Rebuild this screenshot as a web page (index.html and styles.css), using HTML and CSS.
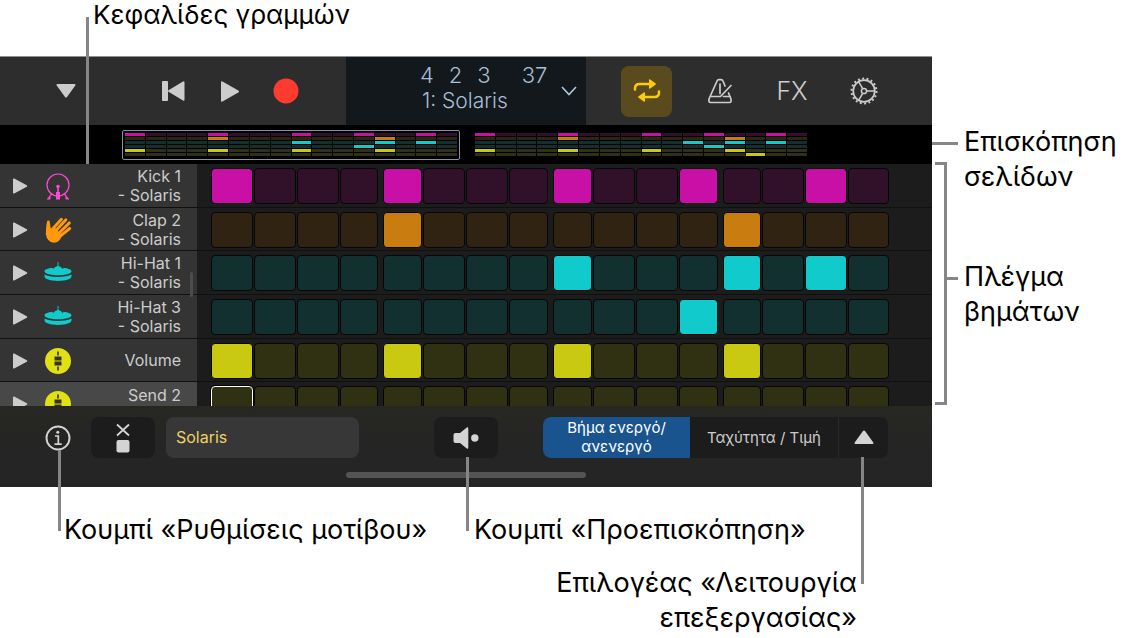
FILE: index.html
```html
<!DOCTYPE html>
<html lang="el">
<head>
<meta charset="utf-8">
<title>Beat Sequencer</title>
<link rel="stylesheet" href="styles.css">
</head>
<body>
<svg class="defs" aria-hidden="true">
  <symbol id="i-play" viewBox="0 0 16 16"><path d="M1 1.2Q1 0 2.200.6L14.800 7.200Q15.800 8 14.800 8.800L2.200 15.400Q1 16 1 14.800Z"/></symbol>
  <symbol id="i-kick" viewBox="0 0 28 28"><circle cx="14" cy="13" r="11" fill="none" stroke="currentColor" stroke-width="1.200"/><circle cx="14" cy="14.500" r="1.800"/><path d="M13.200 15h1.600v5h1.200v7.500h-4V20h1.200zM7 21.500l1.200.6-2 3 .6.800-.8 1.600H2.800l1-1.800.7-.4zM21 21.500l-1.200.6 2 3-.6.800.8 1.600h3.200l-1-1.800-.7-.4z"/></symbol>
  <symbol id="i-clap" viewBox="0 0 28 28"><path d="M1.800 18Q2 13.500 2.900 6.500L5.800 6.800 7 13.500 11 11.500 18 19.500Q15.500 26.800 10 26.800 3 26 1.800 18Z"/><g fill="none" stroke="currentColor" stroke-width="2.900" stroke-linecap="round"><path d="M4.400 6 3.500 17M17.400 3.200 8.500 13M21.900 3.700 11.500 15M25.400 6.900 13.500 18.500M25.700 12.500 15 21"/></g></symbol>
  <symbol id="i-hat" viewBox="0 0 28 28"><path d="M13.600 3h.9v4c1.700.3 3 1.500 4.300 3l.8-1.200c4.700.7 7.900 1.800 7.900 3.500 0 2.400-6 4-13.500 4S.500 14.700.5 12.300c0-1.700 3.200-2.800 7.900-3.500l.8 1.200c1.300-1.500 2.700-2.700 4.400-3z"/><path d="M.5 15.500c2.500 1.600 7.500 2.400 13.500 2.400s11-.8 13.500-2.400v1.800c0 2.700-5.800 4.700-13.500 4.700S.5 20 .5 17.300z"/></symbol>
  <symbol id="i-fader" viewBox="0 0 28 28"><circle cx="14" cy="14" r="13"/><g fill="#34341f"><path d="M13.200 4.500h1.600v4h-1.600zM13.200 19.500h1.600v4h-1.600zM10.500 9.500h7v4h-7zM10.500 14.500h7v4h-7z"/></g></symbol>
</svg>

<main class="figure">
  <p class="note note-top">Κεφαλίδες γραμμών</p>

  <section class="app">
    <header class="toolbar">
      <div class="transport">
        <button class="tool tool-menu" aria-label="Menu"><svg width="20" height="14" viewBox="0 0 20 14"><path d="M1.500 0h17q1.500 0 .8 1.500L11 13q-1 1.200-2 0L.7 1.500Q0 0 1.500 0z"/></svg></button>
        <button class="tool" aria-label="Go to beginning"><svg width="26" height="20" viewBox="0 0 26 20"><rect x="1" y="0" width="6" height="20" rx="1"/><path d="M7.500 9.200 22 .5q1.500-.8 1.500 1v17q0 1.800-1.500 1L7.500 10.800q-1-.8 0-1.600z"/></svg></button>
        <button class="tool" aria-label="Play"><svg width="20" height="21" viewBox="0 0 20 21"><path d="M1 1.500Q1-.3 2.500.5L18.300 9.600q1.300.9 0 1.800L2.500 20.500Q1 21.300 1 19.500z"/></svg></button>
        <button class="tool" aria-label="Record"><svg width="26" height="26" viewBox="0 0 26 26"><circle cx="13" cy="13" r="12.500" fill="#ff3b30"/></svg></button>
      </div>
      <button class="lcd">
        <span class="lcd-text">
          <span class="position"><span>4</span><span>2</span><span>3</span><span class="tick">37</span></span>
          <span class="pattern">1: Solaris</span>
        </span>
        <svg class="chevron" width="16" height="10" viewBox="0 0 16 10"><path d="M1 1l7 7.500L15 1" fill="none" stroke="#b0c6de" stroke-width="1.600"/></svg>
      </button>
      <div class="modes">
        <button class="loop" aria-label="Cycle"><svg width="28" height="24" viewBox="0 0 28 24"><g fill="none" stroke="#ffcc00" stroke-width="2.500" stroke-linecap="round"><path d="M2 10.500V9.500q0-4.500 4.500-4.500H17"/><path d="M26 12.500V13.500q0 4.500-4.500 4.500H11"/></g><path fill="#ffcc00" d="M16 1q0-1.300 1.200-.6l5.500 4q.8.600 0 1.200l-5.500 4Q16 10.300 16 9zM12 14q0-1.300-1.200-.6l-5.500 4q-.8.600 0 1.200l5.500 4q1.200.7 1.200-.6z"/></svg></button>
        <button class="tool" aria-label="Metronome"><svg width="26" height="26" viewBox="0 0 26 26"><g fill="none" stroke="#ccc" stroke-width="1.700" stroke-linecap="round" stroke-linejoin="round"><path d="M18 8 16.200 3.500q-.8-1.800-2-1.800h-2.400q-1.200 0-2 1.800L2.200 20.500q-1.200 4 1.500 4h18.600q2.700 0 1.500-4L21.500 15"/><path d="M4 18.500h9.500L24 7.500M16.500 18.500h6M13 6v9.500"/></g></svg></button>
        <button class="tool fx">FX</button>
        <button class="tool" aria-label="Settings"><svg width="28" height="28" viewBox="0 0 28 28"><g fill="none" stroke="#ccc"><circle cx="14" cy="14" r="10.800" stroke-width="1.700"/><circle cx="14" cy="14" r="12.500" stroke-width="2" stroke-dasharray="1.900 2.463"/><circle cx="14" cy="14" r="2.600" stroke-width="1.500"/><path stroke-width="1.500" d="M16.600 14H25M12.700 11.700 8.600 4.600M12.700 16.300l-4.100 7.100"/></g></svg></button>
      </div>
    </header>

    <nav class="pages" aria-label="Σελίδες">
      <div class="page selected" data-page="1"></div>
      <div class="page" data-page="2"></div>
    </nav>

    <div class="sequencer">
      <div class="row kick" data-row="0"><div class="head"><button class="audition" aria-label="Play Kick 1"><svg><use href="#i-play"/></svg></button><svg class="icon"><use href="#i-kick"/></svg><span class="name">Kick 1<br>- Solaris</span></div></div>
      <div class="row clap short" data-row="1"><div class="head"><button class="audition" aria-label="Play Clap 2"><svg><use href="#i-play"/></svg></button><svg class="icon"><use href="#i-clap"/></svg><span class="name">Clap 2<br>- Solaris</span></div></div>
      <div class="row hat" data-row="2"><div class="head"><button class="audition" aria-label="Play Hi-Hat 1"><svg><use href="#i-play"/></svg></button><svg class="icon"><use href="#i-hat"/></svg><span class="name">Hi-Hat 1<br>- Solaris</span></div></div>
      <div class="row hat" data-row="3"><div class="head"><button class="audition" aria-label="Play Hi-Hat 3"><svg><use href="#i-play"/></svg></button><svg class="icon"><use href="#i-hat"/></svg><span class="name">Hi-Hat 3<br>- Solaris</span></div></div>
      <div class="row auto short" data-row="4"><div class="head"><button class="audition" aria-label="Play Volume"><svg><use href="#i-play"/></svg></button><svg class="icon"><use href="#i-fader"/></svg><span class="name">Volume</span></div></div>
      <div class="row auto active" data-row="5"><div class="head"><button class="audition" aria-label="Play Send 2"><svg><use href="#i-play"/></svg></button><svg class="icon"><use href="#i-fader"/></svg><span class="name">Send 2</span></div></div>
      <span class="thumb"></span>
    </div>

    <footer class="bottom">
      <div class="controls">
        <button class="info leader" aria-label="Ρυθμίσεις μοτίβου"><svg width="26" height="26" viewBox="0 0 26 26"><circle cx="13" cy="13" r="11.500" fill="none" stroke="#d4d4d4" stroke-width="1.900"/><circle cx="12.800" cy="7.300" r="1.500" fill="#d4d4d4"/><path d="M10 11h3.300v8M9.500 19.200h7.200" fill="none" stroke="#d4d4d4" stroke-width="1.700"/></svg></button>
        <button class="pad clear" aria-label="Clear"><svg width="16" height="30" viewBox="0 0 16 30"><path d="M2 1.500l12 11M14 1.500l-12 11" stroke="#d4d4d4" stroke-width="1.800" fill="none"/><rect x="1.500" y="17" width="13" height="12.500" rx="2" fill="#d4d4d4"/></svg></button>
        <input class="pattern-name" type="text" value="Solaris" aria-label="Μοτίβο">
        <button class="pad preview leader" aria-label="Προεπισκόπηση"><svg width="26" height="22" viewBox="0 0 26 22"><path fill="#d4d4d4" d="M2.500 6H7l6.800-5.500Q15.300-.3 15.300 1.500v19q0 1.800-1.500 1L7 16H2.500Q.5 16 .5 14V8Q.5 6 2.500 6z"/><circle cx="21.800" cy="11" r="3.700" fill="#d4d4d4"/></svg></button>
        <div class="segments">
          <button class="segment on">Βήμα ενεργό/<br>ανενεργό</button>
          <button class="segment">Ταχύτητα / Τιμή</button>
          <button class="segment chooser leader" aria-label="Λειτουργία επεξεργασίας"><svg width="20" height="14" viewBox="0 0 20 14"><path fill="#d4d4d4" d="M1.500 14h17q1.500 0 .8-1.500L11 1q-1-1.200-2 0L.7 12.500Q0 14 1.500 14z"/></svg></button>
        </div>
      </div>
      <span class="home"></span>
    </footer>
  </section>

  <aside class="side">
    <p class="note note-pages">Επισκόπηση<br>σελίδων</p>
    <p class="note note-grid">Πλέγμα<br>βημάτων</p>
    <span class="bracket"></span>
  </aside>

  <div class="below">
    <p class="note note-info">Κουμπί «Ρυθμίσεις μοτίβου»</p>
    <p class="note">Κουμπί «Προεπισκόπηση»</p>
    <p class="note note-mode">Επιλογέας «Λειτουργία<br>επεξεργασίας»</p>
  </div>
</main>
<script src="steps.js"></script>
</body>
</html>
```
FILE: styles.css
```css
* { box-sizing: border-box; }
body {
  margin: 0;
  background: #fff;
  color: #000;
  font-family: Inter, "Liberation Sans", sans-serif;
}
button, input { font: inherit; color: inherit; border: 0; padding: 0; margin: 0; background: none; }
svg { display: block; fill: currentColor; }
.defs { position: absolute; width: 0; height: 0; }

/* Figure and its captions */
.figure {
  display: grid;
  grid-template-columns: minmax(0, 1fr) 204px;
  grid-template-rows: 56px auto auto;
}
.note { position: relative; margin: 0; font-size: 27px; line-height: 35px; white-space: nowrap; }
.note-top { padding-left: 93px; font-size: 26px; line-height: 30px; }
.note-top::before {
  content: ""; position: absolute; z-index: 2; left: 86px; top: 17px;
  width: 3px; height: 147px; background: #868686;
}
.side {
  position: relative; grid-column: 2; grid-row: 1 / 3;
  display: flex; flex-direction: column; gap: 65px;
  padding: 124px 0 0 32px;
}
.note-pages::before, .note-grid::before {
  content: ""; position: absolute; height: 3px; top: 18px; left: -32px; width: 26px; background: #868686;
}
.note-grid::before { left: -18px; width: 12px; }
.bracket {
  position: absolute; left: 3px; top: 162px; bottom: 82px; width: 12px;
  border: 3px solid #868686; border-left: 0;
}
.below {
  grid-column: 1;
  display: grid; grid-template-columns: 410px 1fr; row-gap: 18px;
  padding: 25px 75px 0 64px;
}
.note-mode { grid-column: 1 / 3; text-align: right; }
.leader { position: relative; }
.leader::after {
  content: ""; position: absolute; z-index: 2; top: 40px; left: 50%;
  width: 3px; height: 74px; background: #868686;
}
.info.leader::after { top: 33px; height: 81px; }
.chooser.leader::after { left: 22px; height: 127px; }

/* App window */
.app { grid-column: 1; grid-row: 2; border-top: 1px solid #8f8f8f; background: #1c1c1c; color: #ccc; }
.toolbar { display: grid; grid-template-columns: 1fr 240px 1fr; height: 68px; background: #2d2d2d; }
.transport, .modes { display: flex; align-items: center; }
.transport { gap: 16px; padding-left: 46px; }
.tool { width: 40px; height: 40px; display: flex; align-items: center; justify-content: center; }
.tool-menu { margin-right: 52px; }
.lcd {
  display: flex; align-items: center; justify-content: flex-end; gap: 15px;
  padding-right: 9px; background: #12181c; color: #a9bfd6; text-align: left;
  font-size: 22px; line-height: 25px; font-weight: 300;
}
.lcd-text { width: 126px; margin-bottom: 6px; }
.position { display: flex; gap: 15px; }
.tick { margin-left: 16px; }
.pattern { display: block; padding-left: 2px; font-size: 21px; }
.modes { gap: 32px; padding-left: 35px; }
.loop {
  width: 51px; height: 51px; border-radius: 8px; background: #594b1e;
  display: flex; align-items: center; justify-content: center; margin-right: -4px;
}
.fx { font-size: 25px; font-weight: 300; }

/* Page overview */
.pages { display: flex; gap: 12px; height: 39px; padding: 5px 122px 4px; background: #000; }
.page {
  flex: 1; display: grid; grid-template: repeat(6, 3px) / repeat(16, 1fr); gap: 1px;
  padding: 2px; border: 1px solid transparent; border-radius: 2px;
}
.page.selected { border-color: #8790a8; }
.mini { background: var(--off); }
.mini.on { background: var(--on); }

/* Track rows */
.kick { --on: #c910a6; --off: #31112a; --tint: #ff48d8; }
.clap { --on: #c97c10; --off: #312312; --tint: #ff9a0c; }
.hat { --on: #10cacb; --off: #12302f; --tint: #10cacb; }
.auto { --on: #cac911; --off: #303012; --tint: #e0e012; }
.sequencer { position: relative; height: 242px; overflow: hidden; }
.row { display: flex; height: 44px; border-bottom: 1px solid #101010; }
.row.short { height: 43px; }
.head {
  flex: 0 0 197px; display: grid; grid-template-columns: 16px 28px 1fr; column-gap: 16px;
  align-items: center; padding: 1px 16px 0 12px; background: #343434;
}
.active .head { background: #484848; align-items: start; }
.active .audition { margin-top: 13px; }
.active .icon { margin-top: 7px; }
.active .name { margin-top: 3px; }
.audition svg { width: 16px; height: 16px; }
.icon { width: 28px; height: 28px; color: var(--tint); }
.name { text-align: right; font-size: 16px; line-height: 19px; color: #ccc; white-space: nowrap; }
.steps {
  flex: 1; display: grid; grid-template-columns: 168fr 165fr 165fr 167fr; column-gap: 5px;
  padding: 4px 43px 0 14px;
}
.beat { display: grid; grid-template-columns: 39fr 42fr 42fr 39fr; column-gap: 1px; height: 36px; }
.beat:first-child { grid-template-columns: 42fr 42fr 42fr 39fr; }
.beat:last-child { grid-template-columns: 39fr 42fr 42fr 41fr; }
.step { background: var(--off); border: 1px solid #060606; border-radius: 4px; }
.step.on { background: var(--on); }
.active .beat:first-child .step:first-child { border-color: #fff; box-shadow: 0 0 0 1px #060606; }
.thumb { position: absolute; left: 190px; top: 108px; width: 3px; height: 25px; border-radius: 2px; background: #4c4c4c; }

/* Bottom bar */
.bottom { padding: 11px 0 9px; background: linear-gradient(#272722, #252525 40px); }
.controls { display: flex; height: 41px; padding: 0 44px 0 34px; }
.info { width: 48px; display: flex; align-items: center; justify-content: center; margin-right: 9px; }
.pad { width: 64px; border-radius: 8px; background: #1c1c1c; display: flex; align-items: center; justify-content: center; }
.pattern-name {
  width: 193px; margin: 0 auto 0 11px; padding: 0 10px 2px; border-radius: 8px;
  background: #373737; color: #f0d264; font-size: 16px;
}
.preview { margin-right: 45px; }
.segments { display: flex; border-radius: 8px; background: #1c1c1c; }
.segment {
  width: 148px; display: flex; align-items: center; justify-content: center;
  padding-bottom: 1px; font-size: 15px; line-height: 19px; text-align: center; white-space: nowrap;
}
.segment.on { width: 147px; background: #19548f; color: #fff; border-radius: 8px 0 0 8px; }
.segment.chooser { width: 50px; border-left: 1px solid #2a2a2a; }
.home { display: block; width: 240px; height: 6px; margin: 14px auto 0; border-radius: 3px; background: #545454; }
```
FILE: steps.js
```javascript
const tracks = [
  { kind: "kick", on: { 1: [0, 4, 8, 11, 14], 2: [0, 4, 8, 11, 14] } },
  { kind: "clap", on: { 1: [4, 12], 2: [4, 12] } },
  { kind: "hat", on: { 1: [8, 12, 14], 2: [10, 12, 14] } },
  { kind: "hat", on: { 1: [11], 2: [11] } },
  { kind: "auto", on: { 1: [0, 4, 8, 12], 2: [0, 4, 8, 12] } },
  { kind: "auto", on: { 1: [], 2: [13] } }
];

document.querySelectorAll(".page").forEach(page => {
  tracks.forEach(track => {
    for (let i = 0; i < 16; i++) {
      const cell = document.createElement("span");
      const on = track.on[page.dataset.page].includes(i);
      cell.className = "mini " + track.kind + (on ? " on" : "");
      page.append(cell);
    }
  });
});

document.querySelectorAll(".row").forEach(row => {
  const track = tracks[row.dataset.row];
  const steps = document.createElement("div");
  steps.className = "steps";
  for (let b = 0; b < 4; b++) {
    const beat = document.createElement("div");
    beat.className = "beat";
    for (let s = 0; s < 4; s++) {
      const i = b * 4 + s;
      const on = track.on[1].includes(i);
      const step = document.createElement("button");
      step.className = "step" + (on ? " on" : "");
      step.setAttribute("aria-pressed", on);
      step.setAttribute("aria-label", "Step " + (i + 1));
      beat.append(step);
    }
    steps.append(beat);
  }
  row.append(steps);
});
```
